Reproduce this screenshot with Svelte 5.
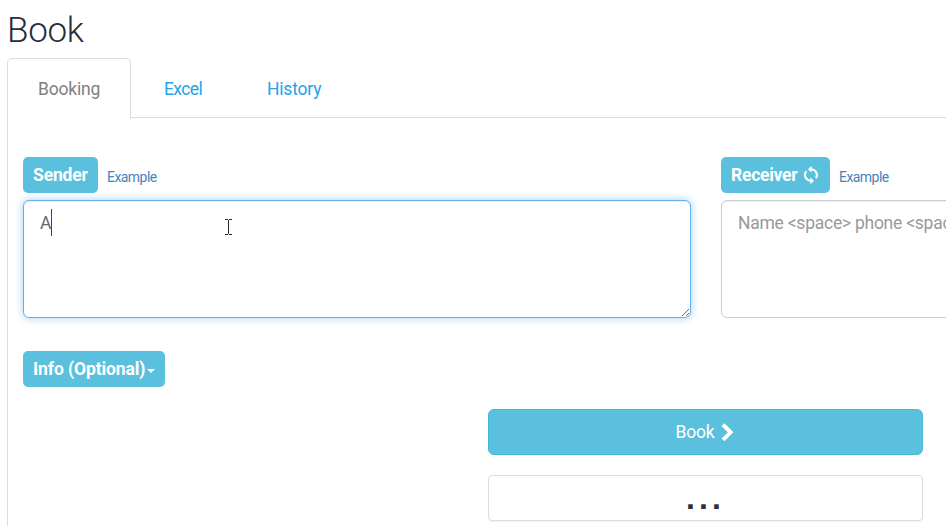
<script>
  let sender = $state('A');
  let receiver = $state('');
</script>

<main>
  <h1>Book</h1>
  <nav>
    <a class="tab active" href="#booking">Booking</a>
    <a class="tab excel" href="#excel">Excel</a>
    <a class="tab history" href="#history">History</a>
  </nav>
  <section class="panel">
    <div class="people">
      <div class="person">
        <div class="heading">
          <button class="badge sender">Sender</button>
          <a class="example" href="#sender-example">Example</a>
        </div>
        <div class="field">
          <textarea class="focused" bind:value={sender} spellcheck="false"></textarea>
          <span class="caret"></span>
          <svg class="pointer" width="7" height="16" viewBox="0 0 7 16" shape-rendering="crispEdges"><path d="M0 .5h3M4 .5h3M3.5 1v14M0 15.5h3M4 15.5h3" stroke="#2b2637" fill="none"/></svg>
        </div>
      </div>
      <div class="person">
        <div class="heading">
          <button class="badge receiver">Receiver
            <svg width="16" height="20" viewBox="0 0 16 20" fill="none" stroke="#fff" stroke-width="2.1"><path d="M4 14.3A5.8 5.8 0 0 1 3.4 6.1M8 4.2A5.8 5.8 0 0 1 12.9 13.2M4 14.3Q5.6 15.8 8 15.8"/><path d="M8.6 .8V7.6L5 4.2ZM7.4 12.4V19.2L11 15.8Z" fill="#fff" stroke="none"/></svg>
          </button>
          <a class="example" href="#receiver-example">Example</a>
        </div>
        <div class="field">
          <textarea bind:value={receiver} wrap="off" placeholder="Name <space> phone <space> address"></textarea>
        </div>
      </div>
    </div>
    <button class="badge info">Info (Optional)<i></i></button>
    <div class="actions">
      <button class="book"><span>Book</span><svg width="13" height="19" viewBox="0 0 13 19"><path d="M2 1.7L9.6 9.3L2 16.9" fill="none" stroke="#fff" stroke-width="4"/></svg></button>
      <button class="more">...</button>
    </div>
  </section>
</main>

<style>
  :global(body) { background: #fff; overflow: hidden; }
  * { box-sizing: border-box; }
  main { width: 946px; height: 526px; overflow: hidden; padding-left: 7px; font-family: Roboto, "Liberation Sans", sans-serif; color: #2b2c3d; }
  h1 { margin: 0; height: 58px; padding-top: 10px; font-size: 35px; line-height: 41px; font-weight: 300; letter-spacing: -.3px; }
  a { text-decoration: none; }
  button, textarea { font-family: inherit; }
  nav { height: 60px; border-bottom: 1px solid #ddd; display: flex; gap: 2px; }
  .tab { height: 60px; padding: 1px 31px 0 31px; font-size: 17.5px; line-height: 60px; color: #22a4e6; white-space: nowrap; }
  .tab.active { width: 124px; height: 61px; padding: 0 30px; border: 1px solid #ddd; border-bottom: 0; border-radius: 5px 5px 0 0; background: #fff; color: #808080; letter-spacing: -.2px; }
  .excel { width: 101px; letter-spacing: -.6px; }
  .history { letter-spacing: -.2px; }
  .panel { border-left: 1px solid #ddd; height: 408px; padding: 39px 0 0 15px; display: flex; flex-direction: column; align-items: flex-start; }
  .people { display: grid; grid-template-columns: 668px 668px; gap: 30px; }
  .heading { display: flex; height: 36px; align-items: center; gap: 9px; }
  .badge { height: 36px; border: 0; border-radius: 5px; background: #5bc0de; color: #fff; font-size: 17.5px; font-weight: 700; padding: 0 0 0 10px; text-align: left; white-space: nowrap; display: flex; align-items: center; }
  .sender { width: 75px; letter-spacing: -.15px; }
  .receiver { width: 109px; gap: 6px; letter-spacing: -.25px; }
  .info { width: 142px; margin-top: 33px; letter-spacing: -.1px; }
  .info i { margin: 4px 0 0 2px; border: 4px solid transparent; border-top-color: #fff; border-bottom: 0; }
  .example { font-size: 14px; letter-spacing: -.55px; color: #4584bb; padding-top: 3px; }
  .field { position: relative; height: 118px; margin-top: 7px; }
  textarea { display: block; width: 668px; height: 118px; resize: vertical; border: 1px solid #ccc; border-radius: 6px; padding: 10px 16px; font-size: 17.5px; line-height: 25px; color: #666; background: #fff; outline: none; box-shadow: inset 0 1px 1px rgba(0,0,0,.075); overflow: hidden; }
  textarea::placeholder { color: #999; opacity: 1; letter-spacing: -.25px; }
  textarea.focused { border-color: #66afe9; box-shadow: inset 0 1px 1px rgba(0,0,0,.075), 0 0 8px rgba(102,175,233,.6); letter-spacing: -.5px; }
  .caret { position: absolute; left: 28px; top: 9px; width: 1px; height: 27px; background: #444; }
  .pointer { position: absolute; left: 202px; top: 19px; }
  .actions { width: 435px; margin: 22px 0 0 465px; display: flex; flex-direction: column; gap: 20px; }
  .book, .more { width: 435px; height: 46px; border-radius: 6px; display: flex; justify-content: center; align-items: center; padding: 0; }
  .book { background: #5bc0de; border: 1px solid #46b8da; color: #fff; font-size: 17.5px; letter-spacing: -.2px; gap: 7px; padding-right: 1px; }
  .more { background: #fff; border: 1px solid #ddd; border-radius: 4px; box-shadow: 0 1px 1px rgba(0,0,0,.05); color: #2b2c3d; font: bold 32px/44px "Liberation Sans", sans-serif; letter-spacing: 4.1px; padding: 0; }
</style>
